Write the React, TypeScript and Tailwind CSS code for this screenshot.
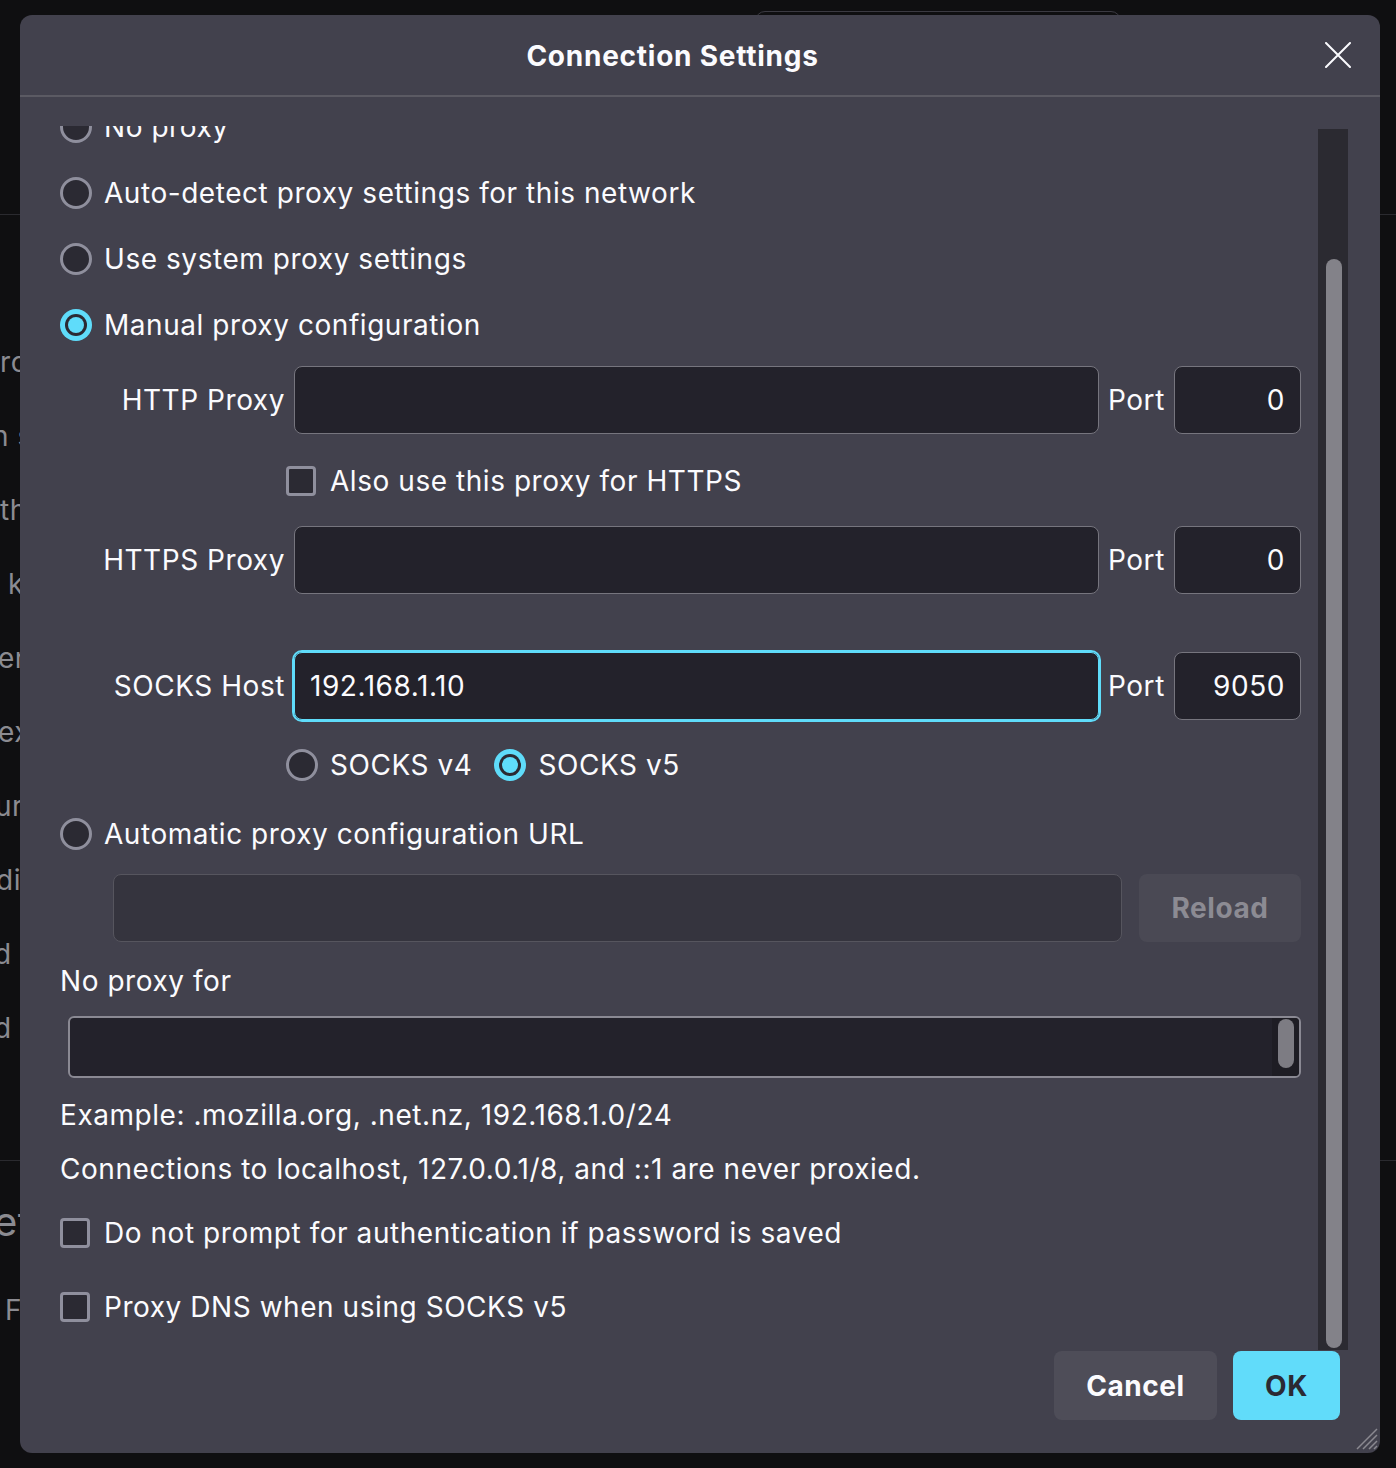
import React from "react";

const fragments = [
  { text: "ro", cls: "ml-0" },
  { text: "n s", cls: "-ml-[8px]" },
  { text: "th", cls: "ml-0" },
  { text: "k", cls: "ml-[8px]" },
  { text: "er", cls: "-ml-[2px]" },
  { text: "ex", cls: "-ml-[2px]" },
  { text: "ur", cls: "-ml-[5px]" },
  { text: "dia", cls: "-ml-[4px]" },
  { text: "d", cls: "-ml-[6px]" },
  { text: "d", cls: "-ml-[6px]" },
];

function Radio({ checked = false }: { checked?: boolean }) {
  if (checked) {
    return (
      <span className="flex h-[32px] w-[32px] shrink-0 items-center justify-center rounded-full bg-[#5fdcfa]">
        <span className="flex h-[22px] w-[22px] items-center justify-center rounded-full bg-[#2b2a33]">
          <span className="h-[16px] w-[16px] rounded-full bg-[#5fdcfa]" />
        </span>
      </span>
    );
  }
  return <span className="h-[32px] w-[32px] shrink-0 rounded-full border-[3px] border-[#8f8f9d] bg-[#2b2a33]" />;
}

function Checkbox() {
  return <span className="h-[30px] w-[30px] shrink-0 rounded-[4px] border-[3px] border-[#8f8f9d] bg-[#2b2a33]" />;
}

function Option({ label, checked = false }: { label: string; checked?: boolean }) {
  return (
    <div className="flex h-[66px] items-center gap-[12px] pt-[1px]">
      <Radio checked={checked} />
      <span>{label}</span>
    </div>
  );
}

function ProxyRow({
  label,
  value = "",
  port,
  focused = false,
}: {
  label: string;
  value?: string;
  port: string;
  focused?: boolean;
}) {
  return (
    <div className="flex h-[68px] items-stretch">
      <div className="flex w-[225px] items-center justify-end">{label}</div>
      <div
        className={`ml-[9px] flex flex-1 items-center rounded-[8px] border bg-[#23222b] px-[15px] ${
          focused ? "border-[#5fdcfa] outline-2 outline-[#5fdcfa]" : "border-[#76757e]"
        }`}
      >
        {value}
      </div>
      <div className="ml-[9px] flex w-[56px] items-center">Port</div>
      <div className="ml-[10px] flex w-[127px] items-center justify-end rounded-[8px] border border-[#76757e] bg-[#23222b] px-[15px]">
        {port}
      </div>
    </div>
  );
}

export default function App() {
  return (
    <div className="relative h-[1468px] w-[1396px] overflow-hidden bg-[#0f0f11] font-['Inter','Liberation_Sans',sans-serif] text-[28px] tracking-[0.55px] text-[#fbfbfe]">
      {/* page behind the dialog */}
      <div className="pt-[214px] text-[#8b8b91]">
        <div className="h-px bg-[#2a2a2f]" />
        <div className="mt-[110px] flex flex-col">
          {fragments.map((f, i) => (
            <div key={i} className={`flex h-[74px] items-center whitespace-nowrap ${f.cls}`}>
              {f.text}
            </div>
          ))}
        </div>
        <div className="mt-[95px] h-px bg-[#2a2a2f]" />
        <div className="-ml-[6px] flex h-[122px] items-center text-[40px]">et</div>
        <div className="ml-[5px] flex h-[54px] items-center">F</div>
      </div>
      <div className="absolute left-[755px] top-[11px] h-[40px] w-[366px] rounded-[10px] border border-[#3b3a42]" />

      {/* dialog */}
      <div className="absolute left-[20px] top-[15px] flex h-[1438px] w-[1360px] flex-col rounded-[12px] bg-[#42414d]">
        <div className="flex h-[82px] shrink-0 items-center border-b-2 border-[#5b5a63]">
          <div className="flex-1 pt-[1px] text-center font-bold tracking-[0.75px]">Connection Settings</div>
          <svg width="26" height="26" viewBox="0 0 26 26" className="mr-[29px]">
            <path d="M1 1L25 25M25 1L1 25" stroke="#fbfbfe" strokeWidth="2" strokeLinecap="round" />
          </svg>
        </div>

        <div className="flex shrink-0 items-start">
          <div className="mt-[29px] h-[1224px] flex-1 overflow-hidden pl-[40px] pr-[17px]">
            <div className="-mt-[33px] flex flex-col">
              <Option label="No proxy" />
              <Option label="Auto-detect proxy settings for this network" />
              <Option label="Use system proxy settings" />
              <Option label="Manual proxy configuration" checked />

              <div className="mt-[9px]">
                <ProxyRow label="HTTP Proxy" port="0" />
              </div>
              <div className="flex h-[92px] items-center gap-[14px] pl-[226px] pt-[1px]">
                <Checkbox />
                <span>Also use this proxy for HTTPS</span>
              </div>
              <ProxyRow label="HTTPS Proxy" port="0" />
              <div className="mt-[58px]">
                <ProxyRow label="SOCKS Host" value="192.168.1.10" port="9050" focused />
              </div>
              <div className="mt-[10px] flex h-[70px] items-center pl-[226px]">
                <div className="flex items-center gap-[12px]">
                  <Radio />
                  <span>SOCKS v4</span>
                </div>
                <div className="ml-[22px] flex items-center gap-[12px]">
                  <Radio checked />
                  <span>SOCKS v5</span>
                </div>
              </div>

              <Option label="Automatic proxy configuration URL" />
              <div className="mt-[8px] flex h-[68px] items-stretch pl-[53px]">
                <div className="flex-1 rounded-[8px] border border-[#56555e] bg-[#35343e]" />
                <div className="ml-[17px] flex w-[162px] items-center justify-center rounded-[8px] bg-[#4a4954] font-bold text-[#8c8b93]">
                  Reload
                </div>
              </div>

              <div className="flex h-[74px] items-center pt-[4px]">No proxy for</div>
              <div className="ml-[8px] flex h-[62px] overflow-hidden rounded-[6px] border-2 border-[#8a8993] bg-[#23222b]">
                <div className="flex-1" />
                <div className="flex w-[27px] bg-[#1e1d24] pb-[8px] pt-[1px]">
                  <div className="ml-[6px] w-[16px] rounded-full bg-[#7d7c83]" />
                </div>
              </div>

              <div className="mt-[10px] flex h-[54px] items-center">Example: .mozilla.org, .net.nz, 192.168.1.0/24</div>
              <div className="flex h-[54px] items-center">Connections to localhost, 127.0.0.1/8, and ::1 are never proxied.</div>
              <div className="flex h-[74px] items-center gap-[14px]">
                <Checkbox />
                <span>Do not prompt for authentication if password is saved</span>
              </div>
              <div className="flex h-[74px] items-center gap-[14px]">
                <Checkbox />
                <span>Proxy DNS when using SOCKS v5</span>
              </div>
            </div>
          </div>

          <div className="mr-[32px] mt-[32px] flex h-[1221px] w-[30px] flex-col bg-[#2b2a31] pb-[2px]">
            <div className="ml-[8px] mt-[130px] w-[16px] flex-1 rounded-full bg-[#838289]" />
          </div>
        </div>

        <div className="flex justify-end gap-[16px] pr-[40px] pt-[1px]">
          <div className="flex h-[69px] w-[163px] items-center justify-center rounded-[8px] bg-[#4e4d58] font-bold">Cancel</div>
          <div className="flex h-[69px] w-[107px] items-center justify-center rounded-[8px] bg-[#61dcfa] font-bold text-[#2b2a33]">OK</div>
        </div>

        <svg width="24" height="24" viewBox="0 0 24 24" className="absolute bottom-[3px] right-[2px]">
          <path d="M23 3L3 23M23 9L9 23M23 15L15 23M23 20L20 23" stroke="#8a8990" strokeWidth="1.5" />
        </svg>
      </div>
    </div>
  );
}
